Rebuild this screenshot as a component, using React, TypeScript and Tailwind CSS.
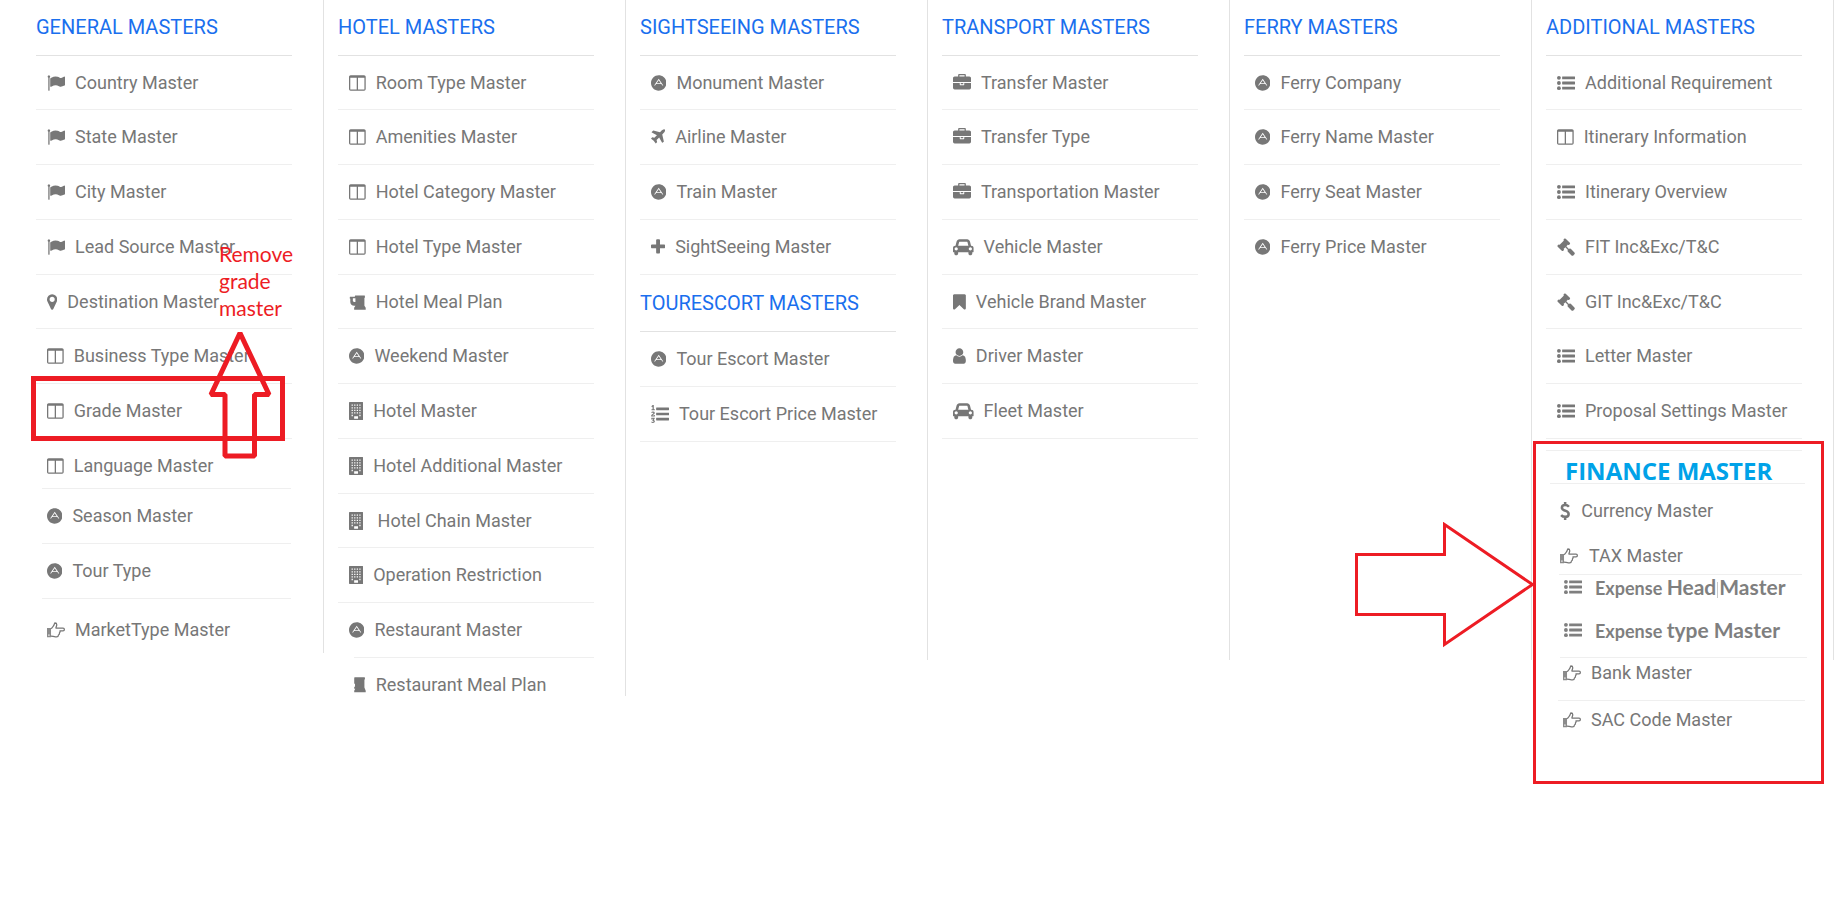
import type { ReactNode } from "react";

type IconName =
  | "flag" | "marker" | "columns" | "adn" | "hand" | "beer" | "beerCut" | "building" | "plane" | "plus"
  | "listOl" | "listUl" | "briefcase" | "car" | "bookmark" | "user" | "gavel" | "dollar";

const building = [256, 512, 768, 1024, 1280]
  .map((y) => [256, 512, 768, 1024].map((x) => (y === 1280 && (x === 512 || x === 768) ? "" : `M${x} ${y}h128v128h-128z`)).join(""))
  .join("");

const beerPath =
  "M640 896v-384h-256v256q0 53 37.5 90.5t90.5 37.5h128zm1024 576v192h-1152v-192l128-192h-128q-159 0-271.5-112.5t-112.5-271.5v-320l-64-64 32-128h480l32-128h960l32 192-64 32v800z";

const icons: Record<IconName, { w: number; body: ReactNode }> = {
  flag: {
    w: 1792,
    body: <path d="M320 256q0 72-64 110v1266q0 13-9.5 22.5t-22.5 9.5h-64q-13 0-22.5-9.5t-9.5-22.5v-1266q-64-38-64-110 0-53 37.5-90.5t90.5-37.5 90.5 37.5 37.5 90.5zm1472 64v763q0 25-12.5 38.5t-39.5 27.5q-215 116-369 116-61 0-123.5-22t-108.5-48-115.5-48-142.5-22q-192 0-464 146-17 9-33 9-26 0-45-19t-19-45v-742q0-32 31-55 21-14 79-43 236-120 421-120 107 0 200 29t219 88q38 19 88 19 54 0 117.5-21t110-47 88-47 54.5-21q26 0 45 19t19 45z" />,
  },
  marker: {
    w: 1024,
    body: <path d="M768 640q0-106-75-181t-181-75-181 75-75 181 75 181 181 75 181-75 75-181zm256 0q0 109-33 179l-364 774q-16 33-47.5 52t-67.5 19-67.5-19-46.5-52l-365-774q-33-70-33-179 0-212 150-362t362-150 362 150 150 362z" />,
  },
  columns: {
    w: 1664,
    body: <path fillRule="evenodd" d="M160 128h1344q66 0 113 47t47 113v1216q0 66-47 113t-113 47h-1344q-66 0-113-47t-47-113v-1216q0-66 47-113t113-47zM128 384v1152h640v-1152zM896 384v1152h640v-1152z" />,
  },
  adn: {
    w: 1536,
    body: (
      <g transform="translate(0 103) scale(3.097)">
        <path d="M248 167.500l64.900 98.800H183.100l64.900-98.800zM496 256c0 136.900-111.100 248-248 248S0 392.900 0 256 111.100 8 248 8s248 111.100 248 248zm-99.800 82.700L248 115.500 99.800 338.700h30.400l33.600-51.700h168.600l33.600 51.700h30.200z" />
      </g>
    ),
  },
  hand: {
    w: 1792,
    body: (
      <>
        <path d="M0 700h400v910h-400zM128 1344v128h128v-128z" fillRule="evenodd" opacity="0.85" />
        <path
          fill="none"
          stroke="currentColor"
          strokeWidth="128"
          strokeLinejoin="round"
          d="M384 764C500 750 570 590 690 410C750 320 730 200 800 200C920 200 970 260 970 370C970 500 890 590 890 704H1600Q1728 704 1728 840Q1728 980 1600 980H1290Q1340 1100 1240 1200Q1260 1320 1140 1390Q1130 1580 960 1580H830C660 1580 560 1500 384 1500"
        />
      </>
    ),
  },
  beer: { w: 1664, body: <path d={beerPath} /> },
  beerCut: { w: 1664, body: <path d="M520 256l24-128h1024l32 192-64 32v800l128 320v150h-1144v-150l100-192h-100v-200h80v-300h-80z" /> },
  building: {
    w: 1408,
    body: <path fillRule="evenodd" d={`M64 0h1280q64 0 64 64v1664q0 64-64 64h-1280q-64 0-64-64v-1664q0-64 64-64zM512 1408v256h384v-256z${building}`} />,
  },
  plane: {
    w: 1408,
    body: (
      <g transform="translate(-192 0)">
        <path d="M1568 160q44 52 12 148t-108 172l-161 161 160 696q5 19-12 33l-128 96q-7 6-19 6-4 0-7-1-15-3-21-16l-279-508-259 259 53 194q5 17-8 31l-96 96q-9 9-23 9h-2q-15-2-24-13l-189-252-252-189q-11-7-13-23-1-13 9-25l96-97q9-9 23-9 6 0 8 1l194 53 259-259-508-279q-14-8-17-24-2-16 9-27l128-128q14-13 30-8l665 159 160-160q76-76 172-108t148 12z" />
      </g>
    ),
  },
  plus: {
    w: 1408,
    body: (
      <g transform="translate(-192 0)">
        <path d="M1600 736v192q0 40-28 68t-68 28h-416v416q0 40-28 68t-68 28h-192q-40 0-68-28t-28-68v-416h-416q-40 0-68-28t-28-68v-192q0-40 28-68t68-28h416v-416q0-40 28-68t68-28h192q40 0 68 28t28 68v416h416q40 0 68 28t28 68z" />
      </g>
    ),
  },
  listOl: {
    w: 1792,
    body: <path d="M381 1620q0 80-54.500 126t-135.500 46q-106 0-172-66l57-88q49 45 106 45 29 0 50.500-14.500t21.500-42.500q0-64-105-56l-26-56q8-10 32.500-43.500t42.500-54 37-38.500v-1q-16 0-48.500 1t-48.500 1v53h-106v-152h333v88l-95 115q51 12 81 49t30 88zm2-627v159h-362q-6-36-6-54 0-51 23.500-93t56.500-68 66-47.500 56.500-43.500 23.500-45q0-25-14.500-38.500t-39.500-13.500q-46 0-81 58l-85-59q24-51 71.500-79.500t105.500-28.500q73 0 123 41.500t50 112.500q0 50-34 91.500t-75 64.500-75.500 50.500-35.500 52.500h127v-60h105zm1409 319v192q0 13-9.500 22.500t-22.500 9.500h-1216q-13 0-22.500-9.500t-9.500-22.500v-192q0-14 9-23t23-9h1216q13 0 22.500 9.500t9.500 22.500zm-1408-899v99h-335v-99h107q0-41 .5-121.500t.5-121.500v-12h-2q-8 17-50 54l-71-76 136-127h106v404h108zm1408 387v192q0 13-9.500 22.500t-22.500 9.500h-1216q-13 0-22.500-9.500t-9.500-22.500v-192q0-14 9-23t23-9h1216q13 0 22.500 9.500t9.500 22.500zm0-512v192q0 13-9.500 22.500t-22.500 9.500h-1216q-13 0-22.500-9.500t-9.500-22.500v-192q0-13 9.500-22.500t22.500-9.500h1216q13 0 22.500 9.500t9.500 22.500z" />,
  },
  listUl: {
    w: 1792,
    body: (
      <>
        {[384, 896, 1408].map((y) => (
          <g key={y}>
            <circle cx="192" cy={y} r="192" />
            <rect x="512" y={y - 140} width="1280" height="280" rx="32" />
          </g>
        ))}
      </>
    ),
  },
  briefcase: {
    w: 1792,
    body: <path d="M640 256h512v-128h-512v128zm1152 640v480q0 66-47 113t-113 47h-1472q-66 0-113-47t-47-113v-480h672v160q0 26 19 45t45 19h320q26 0 45-19t19-45v-160h672zm-768 0v128h-256v-128h256zm768-480v384h-1792v-384q0-66 47-113t113-47h352v-160q0-40 28-68t68-28h576q40 0 68 28t28 68v160h352q66 0 113 47t47 113z" />,
  },
  car: {
    w: 2048,
    body: <path d="M480 1088q0-66-47-113t-113-47-113 47-47 113 47 113 113 47 113-47 47-113zm36-320h1016l-89-357q-2-8-14-17.500t-21-9.500h-768q-9 0-21 9.500t-14 17.500zm1372 320q0-66-47-113t-113-47-113 47-47 113 47 113 113 47 113-47 47-113zm160-96v384q0 14-9 23t-23 9h-96v128q0 80-56 136t-136 56-136-56-56-136v-128h-1024v128q0 80-56 136t-136 56-136-56-56-136v-128h-96q-14 0-23-9t-9-23v-384q0-93 65.500-158.500t158.500-65.500h28l105-419q23-94 104-157.500t179-63.500h768q98 0 179 63.500t104 157.500l105 419h28q93 0 158.500 65.500t65.500 158.500z" />,
  },
  bookmark: {
    w: 1280,
    body: <path d="M1164 128q23 0 44 9 33 13 52.500 41t19.500 62v1289q0 34-19.500 62t-52.500 41q-19 8-44 8-48 0-83-32l-441-424-441 424q-36 33-83 33-23 0-44-9-33-13-52.500-41t-19.500-62v-1289q0-34 19.500-62t52.500-41q21-9 44-9h1048z" />,
  },
  user: {
    w: 1280,
    body: <path d="M1280 1399q0 109-62.500 187t-150.500 78h-854q-88 0-150.500-78t-62.500-187q0-85 8.500-160.500t31.500-152 58.500-131 94-89 134.500-34.500q131 128 313 128t313-128q76 0 134.500 34.500t94 89 58.500 131 31.500 152 8.500 160.500zm-256-887q0 159-112.500 271.500t-271.500 112.500-271.500-112.500-112.500-271.500 112.500-271.500 271.500-112.500 271.500 112.500 112.500 271.500z" />,
  },
  gavel: {
    w: 1792,
    body: <path d="M1771 1536q0 53-37 90l-107 108q-39 37-91 37-53 0-90-37l-363-364q-38-36-38-90 0-53 43-96l-256-256-126 126q-14 14-34 14t-34-14q2 2 12.500 12t12.500 13 10 11.500 10 13.500 6 13.500 5.500 16.500 1.500 18q0 38-28 68-3 3-16.500 18t-19 20.500-18.500 16.500-22 15.500-22 9-26 4.500q-40 0-68-28l-408-408q-28-28-28-68 0-13 4.500-26t9-22 15.500-22 16.500-18.500 20.500-19 18-16.500q30-28 68-28 10 0 18 1.500t16.500 5.500 13.500 6 13.500 10 11.500 10 13 12.500 12 12.500q-14-14-14-34t14-34l348-348q14-14 34-14t34 14q-2-2-12.500-12t-12.500-13-10-11.500-10-13.500-6-13.500-5.500-16.500-1.500-18q0-38 28-68 3-3 16.500-18t19-20.500 18.500-16.500 22-15.500 22-9 26-4.500q40 0 68 28l408 408q28 28 28 68 0 13-4.500 26t-9 22-15.500 22-16.500 18.500-20.500 19-18 16.500q-30 28-68 28-10 0-18-1.500t-16.500-5.500-13.500-6-13.500-10-11.500-10-13-12.500-12-12.500q14 14 14 34t-14 34l-126 126 256 256q43-43 96-43 52 0 91 37l363 363q37 39 37 91z" />,
  },
  dollar: {
    w: 1024,
    body: (
      <path
        fill="none"
        stroke="currentColor"
        strokeWidth="250"
        d="M512 0V300M512 1492V1792M890 470Q740 300 510 300Q190 300 190 560Q190 740 400 820L640 910Q860 1000 860 1210Q860 1480 510 1480Q270 1480 110 1300"
      />
    ),
  },
};

function Icon({ name }: { name: IconName }) {
  const { w, body } = icons[name];
  return (
    <svg viewBox={`0 0 ${w} 1792`} fill="currentColor" aria-hidden="true" className="h-[18px] w-auto shrink-0">
      {body}
    </svg>
  );
}

type Item = { icon: IconName; label: string; row?: string; link?: string; rule?: string };

const rowHeights = "h-[55px] nth-[4n+1]:h-[54px]";

function MasterList({ title, items, className = "" }: { title: string; items: Item[]; className?: string }) {
  return (
    <section className={className}>
      <h2 className="flex h-14 items-end border-b border-[#e2e2e2] pb-4 text-[20px] leading-6 text-[#1a6fee]">{title}</h2>
      <ul>
        {items.map((item) => (
          <li key={item.label} className={`flex flex-col ${item.row ?? rowHeights}`}>
            <a href="#" className={`flex min-h-0 flex-1 items-center gap-[10px] whitespace-nowrap pl-[11px] ${item.link ?? ""}`}>
              <Icon name={item.icon} />
              {item.label}
            </a>
            <div className={`h-px shrink-0 bg-[#efefef] ${item.rule ?? ""}`} />
          </li>
        ))}
      </ul>
    </section>
  );
}

function Column({ height, children }: { height: string; children: ReactNode }) {
  return <div className={`relative border-r border-[#e2e2e2] pl-[14px] pr-[31px] ${height}`}>{children}</div>;
}

const general: Item[] = [
  { icon: "flag", label: "Country Master" },
  { icon: "flag", label: "State Master" },
  { icon: "flag", label: "City Master" },
  { icon: "flag", label: "Lead Source Master" },
  { icon: "marker", label: "Destination Master" },
  { icon: "columns", label: "Business Type Master" },
  { icon: "columns", label: "Grade Master" },
  { icon: "columns", label: "Language Master", row: "h-[50px]", link: "pt-1", rule: "ml-[6px] mr-px" },
  { icon: "adn", label: "Season Master", row: "h-[55px]", rule: "ml-[6px] mr-px" },
  { icon: "adn", label: "Tour Type", row: "h-[55px]", rule: "ml-[6px] mr-px" },
  { icon: "hand", label: "MarketType Master", row: "h-[54px]", link: "pt-2", rule: "invisible" },
];

const hotel: Item[] = [
  { icon: "columns", label: "Room Type Master" },
  { icon: "columns", label: "Amenities Master" },
  { icon: "columns", label: "Hotel Category Master" },
  { icon: "columns", label: "Hotel Type Master" },
  { icon: "beer", label: "Hotel Meal Plan" },
  { icon: "adn", label: "Weekend Master" },
  { icon: "building", label: "Hotel Master" },
  { icon: "building", label: "Hotel Additional Master" },
  { icon: "building", label: "\u00a0Hotel Chain Master" },
  { icon: "building", label: "Operation Restriction" },
  { icon: "adn", label: "Restaurant Master", rule: "ml-4" },
  { icon: "beerCut", label: "Restaurant Meal Plan", row: "h-[54px]", rule: "invisible" },
];

const sightseeing: Item[] = [
  { icon: "adn", label: "Monument Master" },
  { icon: "plane", label: "Airline Master" },
  { icon: "adn", label: "Train Master" },
  { icon: "plus", label: "SightSeeing Master" },
];

const tourEscort: Item[] = [
  { icon: "adn", label: "Tour Escort Master", row: "h-[55px]" },
  { icon: "listOl", label: "Tour Escort Price Master" },
];

const transport: Item[] = [
  { icon: "briefcase", label: "Transfer Master" },
  { icon: "briefcase", label: "Transfer Type" },
  { icon: "briefcase", label: "Transportation Master" },
  { icon: "car", label: "Vehicle Master" },
  { icon: "bookmark", label: "Vehicle Brand Master" },
  { icon: "user", label: "Driver Master" },
  { icon: "car", label: "Fleet Master" },
];

const ferry: Item[] = [
  { icon: "adn", label: "Ferry Company" },
  { icon: "adn", label: "Ferry Name Master" },
  { icon: "adn", label: "Ferry Seat Master" },
  { icon: "adn", label: "Ferry Price Master", rule: "invisible" },
];

const additional: Item[] = [
  { icon: "listUl", label: "Additional Requirement" },
  { icon: "columns", label: "Itinerary Information" },
  { icon: "listUl", label: "Itinerary Overview" },
  { icon: "gavel", label: "FIT Inc&Exc/T&C" },
  { icon: "gavel", label: "GIT Inc&Exc/T&C" },
  { icon: "listUl", label: "Letter Master" },
  { icon: "listUl", label: "Proposal Settings Master" },
];

function FinanceRow({ icon, className, children }: { icon: IconName; className: string; children: ReactNode }) {
  return (
    <a href="#" className={`flex items-center whitespace-nowrap ${className}`}>
      <Icon name={icon} />
      <span>{children}</span>
    </a>
  );
}

function FinancePanel() {
  return (
    <section className="relative -ml-[13px] -mr-[22px] mt-[2px] h-[343px] border-[3px] border-[#ed1c24] bg-white pt-[6px]">
      <svg viewBox="0 0 182 126" className="absolute right-full top-[78px] h-[126px] w-[182px]" aria-hidden="true">
        <path d="M2.500 32.500H90.500V2.500L178.500 62.500L90.500 122.500V92.500H2.500Z" fill="none" stroke="#ed1c24" strokeWidth="3" />
      </svg>
      <div className="ml-[10px] mr-[19px] h-px bg-[#efefef]" />
      <h2 className="flex h-8 items-center pb-px pl-[29px] pt-2 font-['Open_Sans',sans-serif] text-[24px] font-bold leading-8 text-[#00a2e8]">FINANCE MASTER</h2>
      <div className="ml-[14px] mr-4 h-px bg-[#efefef]" />
      <FinanceRow icon="dollar" className="h-[54px] gap-[11px] pl-6">Currency Master</FinanceRow>
      <FinanceRow icon="hand" className="h-9 gap-[11px] pl-6">TAX Master</FinanceRow>
      <div className="ml-[23px] mr-[19px] h-px bg-[#efefef]" />
      <FinanceRow icon="listUl" className="h-7 gap-[13px] pb-1 pl-7 font-['Lato',sans-serif] font-bold text-[#7f7f7f]">
        Expense <span className="text-[21px]">Head</span>
        <span className="mx-px inline-block h-4 w-px bg-[#c8c8c8] align-middle" />
        <span className="text-[21px]">Master</span>
      </FinanceRow>
      <FinanceRow icon="listUl" className="h-[54px] gap-[13px] pl-7 font-['Lato',sans-serif] font-bold text-[#7f7f7f]">
        Expense <span className="text-[21px]">type Master</span>
      </FinanceRow>
      <div className="ml-6 mr-[14px] h-px bg-[#efefef]" />
      <FinanceRow icon="hand" className="h-[42px] gap-[10px] pb-3 pl-[27px]">Bank Master</FinanceRow>
      <div className="ml-[22px] mr-4 h-px bg-[#efefef]" />
      <FinanceRow icon="hand" className="h-[38px] gap-[10px] pl-[27px]">SAC Code Master</FinanceRow>
    </section>
  );
}

function RemoveNote() {
  return (
    <>
      <p className="absolute left-[197px] top-[240px] font-['Lato',sans-serif] text-[21px] leading-[27px] text-[#ed1c24]">
        Remove
        <br />
        grade
        <br />
        master
      </p>
      <div className="absolute left-[9px] top-[376px] h-[65px] w-[254px] border-[5px] border-[#ed1c24]" />
      <svg viewBox="0 0 66 130" className="absolute left-[185px] top-[330px] h-[130px] w-[66px]" aria-hidden="true">
        <path d="M33 3L62 64.500H47.500V126H18V64.500H4Z" fill="none" stroke="#ed1c24" strokeWidth="5" strokeLinejoin="bevel" />
      </svg>
    </>
  );
}

export default function App() {
  return (
    <main className="grid min-h-screen grid-cols-6 items-start bg-white pl-[22px] pr-[2px] font-['Roboto',sans-serif] text-[18px] leading-6 text-[#777777]">
      <Column height="h-[653px]">
        <MasterList title="GENERAL MASTERS" items={general} />
        <RemoveNote />
      </Column>
      <Column height="h-[696px]">
        <MasterList title="HOTEL MASTERS" items={hotel} />
      </Column>
      <Column height="h-[660px]">
        <MasterList title="SIGHTSEEING MASTERS" items={sightseeing} />
        <MasterList title="TOURESCORT MASTERS" items={tourEscort} className="pt-px" />
      </Column>
      <Column height="h-[660px]">
        <MasterList title="TRANSPORT MASTERS" items={transport} />
      </Column>
      <Column height="h-[660px]">
        <MasterList title="FERRY MASTERS" items={ferry} />
      </Column>
      <Column height="h-[660px]">
        <MasterList title="ADDITIONAL MASTERS" items={additional} />
        <FinancePanel />
      </Column>
    </main>
  );
}
